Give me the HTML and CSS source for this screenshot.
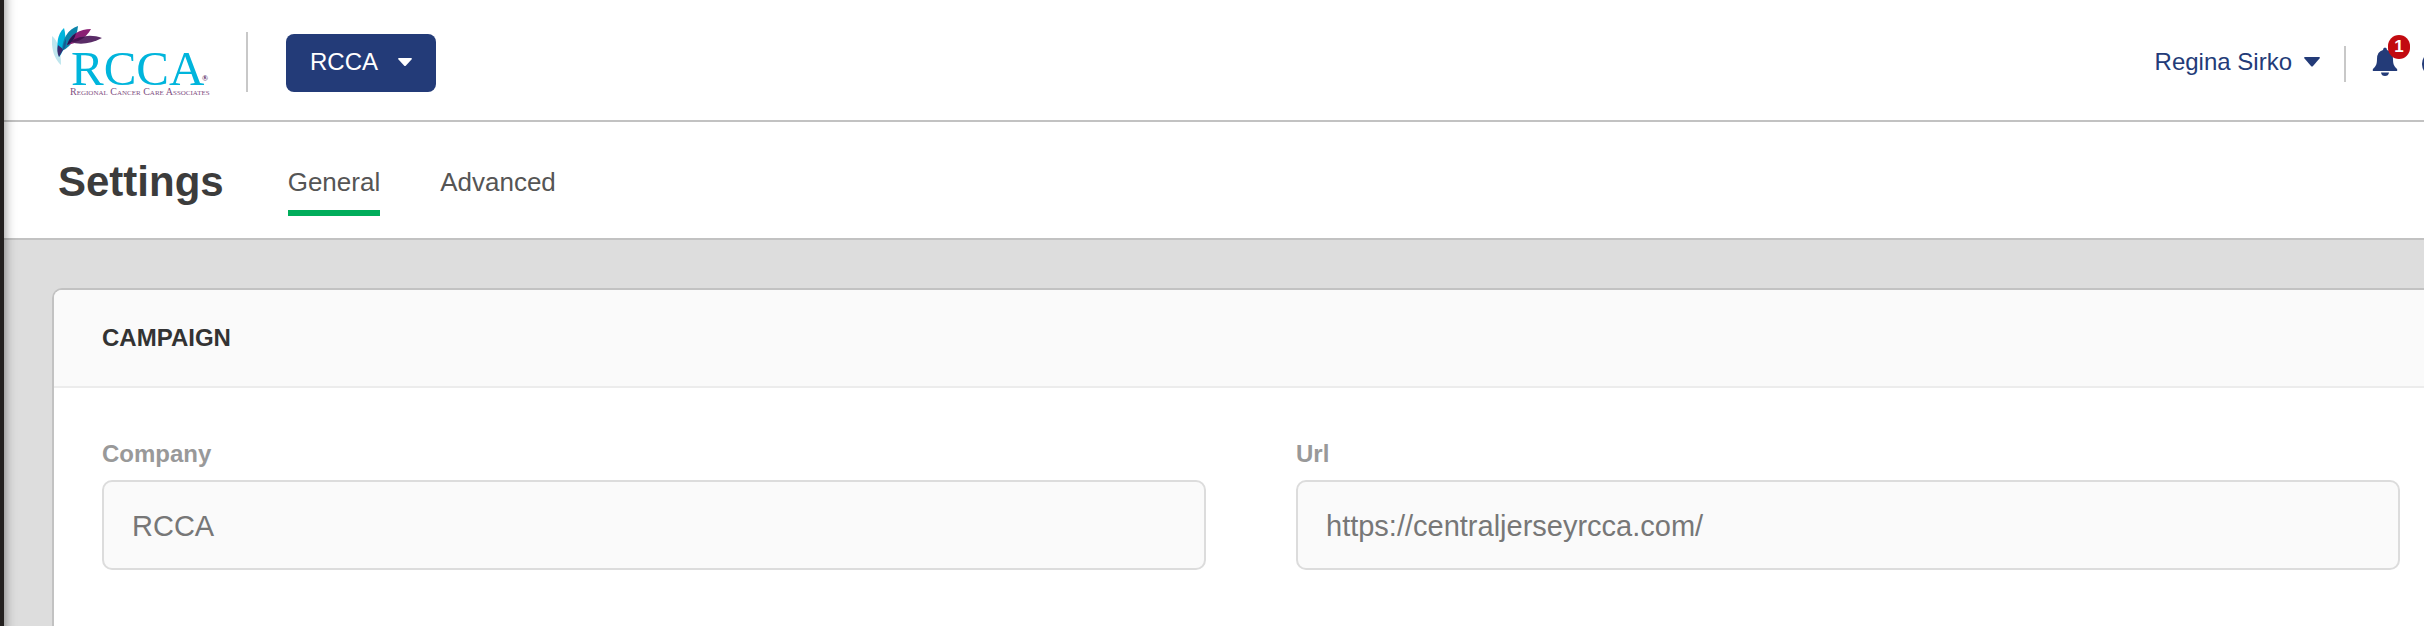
FILE: index.html
```html
<!DOCTYPE html>
<html lang="en">
<head>
<meta charset="utf-8">
<title>Settings</title>
<link rel="stylesheet" href="styles.css">
</head>
<body>
<div class="app">
  <aside class="sidebar"></aside>
  <div class="main">
    <header class="topbar">
      <a class="logo" href="#" aria-label="Regional Cancer Care Associates">
        <svg width="160" height="76" viewBox="0 0 160 76">
          <path d="M0 14C6 19 9 28 9 43C2 37-1 26 0 14Z" fill="#bfe6ee"/>
          <path d="M7 35C4 23 5 12 12 6C15 17 13 28 7 35Z" fill="#00b5dc"/>
          <path d="M10 29C10 17 16 7 26 4C25 15 20 24 10 29Z" fill="#0b84aa"/>
          <path d="M15 23C18 12 28 7 39 7C34 16 26 21 15 23Z" fill="#8a1f74"/>
          <path d="M19 20C28 13 40 12 50 16C39 22 27 23 19 20Z" fill="#5a2c67"/>
          <path d="M6 23C8 25 10 25 11 28L7 35C5 31 5 27 6 23Z" fill="#3a2a6e"/>
          <path d="M11 28C11 23 12 20 14 17C14 20 14 23 13 26Z" fill="#155a94"/>
          <path d="M15 23C17 17 20 14 24 11C23 16 20 21 15 23Z" fill="#24164f"/>
          <path d="M19 20C22 17 26 15 33 15C29 18 25 20 19 20Z" fill="#45124f"/>
          <text class="logo-name" x="19" y="63">RCCA</text>
          <text class="logo-mark" x="150" y="59">®</text>
          <text class="logo-tagline" x="18" y="73">Regional Cancer Care Associates</text>
        </svg>
      </a>
      <span class="divider divider-tall"></span>
      <button class="account" type="button">RCCA
        <svg width="14" height="8" viewBox="0 0 14 8"><path d="M1 0H13Q14.500 0 13.500 1.500L8 7.500Q7 8.500 6 7.500L.5 1.500Q-.5 0 1 0Z" fill="currentColor"/></svg>
      </button>
      <div class="tools">
        <button class="user" type="button">Regina Sirko
          <svg width="16" height="10" viewBox="0 0 16 10"><path d="M1 0H15Q16.500 0 15.500 1.500L9 9Q8 10 7 9L.5 1.500Q-.5 0 1 0Z" fill="currentColor"/></svg>
        </button>
        <span class="divider divider-short"></span>
        <button class="bell" type="button" aria-label="Notifications">
          <svg width="26" height="30" viewBox="0 0 26 30"><path d="M11 3Q11 .5 13 .5T15 3Q21 4.500 21 12C21 18 22.500 19.500 25 22Q26 24 24 24H2Q0 24 1 22C3.500 19.500 5 18 5 12Q5 4.500 11 3ZM9 25.500H17Q16.500 29 13 29T9 25.500Z" fill="currentColor"/></svg>
          <span class="badge">1</span>
        </button>
        <button class="help" type="button" aria-label="Help">
          <svg width="26" height="26" viewBox="0 0 26 26"><circle cx="13" cy="13" r="13" fill="currentColor"/></svg>
        </button>
      </div>
    </header>
    <nav class="subbar">
      <h1 class="title">Settings</h1>
      <a class="tab tab-active" href="#">General</a>
      <a class="tab" href="#">Advanced</a>
    </nav>
    <main class="content">
      <section class="card">
        <h2 class="card-title">CAMPAIGN</h2>
        <form class="fields">
          <div class="field">
            <label for="company">Company</label>
            <input id="company" type="text" value="RCCA">
          </div>
          <div class="field">
            <label for="url">Url</label>
            <input id="url" type="text" value="https://centraljerseyrcca.com/">
          </div>
        </form>
      </section>
    </main>
  </div>
</div>
</body>
</html>
```
FILE: styles.css
```css
* {
  box-sizing: border-box;
}

body {
  margin: 0;
  background: #ddd;
  color: #333;
  font-family: "Liberation Sans", Arial, sans-serif;
  font-size: 24px;
  line-height: 28px;
  overflow: hidden;
}

button,
input {
  font: inherit;
}

button {
  border: 0;
  padding: 0;
  background: none;
  color: #233b78;
}

svg {
  display: block;
}

.app {
  display: flex;
  min-height: 100vh;
}

.sidebar {
  position: relative;
  z-index: 1;
  flex: none;
  width: 4px;
  background: #23201f;
  box-shadow: -10px 0 12px 10px rgba(0, 0, 0, 0.5);
}

.main {
  display: flex;
  flex-direction: column;
  flex: 1;
  min-width: 0;
}

.topbar {
  display: flex;
  align-items: center;
  height: 122px;
  padding-left: 48px;
  border-bottom: 2px solid #c2c2c2;
  background: #fff;
  overflow: hidden;
}

.logo-name {
  font-family: "Liberation Serif", serif;
  font-size: 49px;
  fill: #00b5dc;
}

.logo-mark {
  font-family: "Liberation Serif", serif;
  font-size: 8px;
  font-weight: 700;
  fill: #5a2c67;
}

.logo-tagline {
  font-family: "Liberation Serif", serif;
  font-size: 10px;
  font-variant: small-caps;
  fill: #7f4f82;
}

.divider {
  flex: none;
  width: 2px;
  background: #c8c8c8;
}

.divider-tall {
  height: 60px;
  margin: 4px 38px 0 34px;
}

.divider-short {
  height: 36px;
  margin: 0 26px 0 24px;
}

.account {
  display: flex;
  align-items: center;
  gap: 20px;
  height: 58px;
  margin-top: 6px;
  padding: 0 24px 2px;
  border-radius: 8px;
  background: #233b78;
  color: #fff;
}

.tools {
  display: flex;
  align-items: center;
  margin: 6px -24px 0 auto;
}

.user {
  display: flex;
  align-items: center;
  gap: 12px;
  padding-bottom: 2px;
}

.divider-short,
.help {
  margin-top: 2px;
}

.bell {
  position: relative;
}

.bell svg {
  margin-bottom: 2px;
}

.badge {
  position: absolute;
  top: -12px;
  right: -12px;
  width: 22px;
  height: 24px;
  border-radius: 11px;
  background: #c20a10;
  color: #fff;
  font-size: 17px;
  font-weight: 700;
  line-height: 24px;
}

.help {
  margin-left: 24px;
}

.subbar {
  display: flex;
  align-items: center;
  height: 118px;
  padding-left: 54px;
  border-bottom: 2px solid #c2c2c2;
  background: #fff;
}

.title {
  margin: 4px 64px 0 0;
  color: #3c3c3c;
  font-size: 42px;
  line-height: 48px;
}

.tab {
  margin: 0 60px 0 0;
  padding: 22px 0 12px;
  border-bottom: 6px solid transparent;
  color: #555;
  font-size: 26px;
  line-height: 32px;
  text-decoration: none;
}

.tab-active {
  border-color: #00ad5b;
}

.content {
  display: flex;
  flex: 1;
  padding: 48px 0 0 48px;
}

.card {
  flex: 1;
  border: 2px solid #c2c2c2;
  border-width: 2px 0 0 2px;
  border-top-left-radius: 10px;
  background: #fff;
}

.card-title {
  margin: 0;
  padding: 34px 48px;
  border-bottom: 2px solid #ececec;
  border-top-left-radius: 8px;
  background: #fafafa;
  color: #333;
  font-size: 24px;
  line-height: 28px;
}

.fields {
  display: grid;
  grid-template-columns: 1fr 1fr;
  gap: 90px;
  padding: 52px 24px 52px 48px;
}

.field {
  display: grid;
  gap: 12px;
}

.field label {
  color: #999;
  font-weight: 700;
}

.field input {
  width: 100%;
  height: 90px;
  padding: 2px 28px 0;
  border: 2px solid #dcdcdc;
  border-radius: 10px;
  background: #fafafa;
  color: #777;
  font-size: 29px;
}
```
